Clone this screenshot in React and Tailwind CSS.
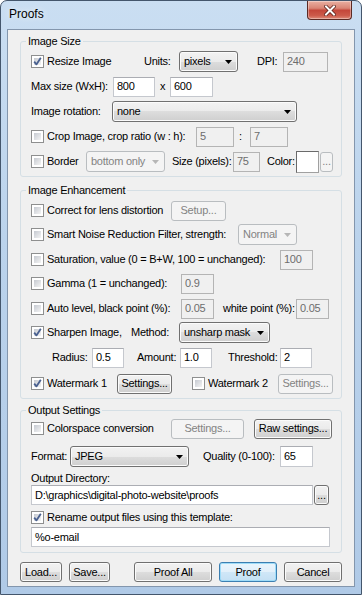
import React from 'react';

const FONT = "font-['Liberation_Sans',Arial,sans-serif]";

function Check({ checked }) {
  return (
    <span className="relative flex w-[13px] h-[13px] shrink-0 border border-[#8e8f8f] bg-white p-[2px]">
      <span className="flex-1 bg-[linear-gradient(135deg,#c6cad1,#f4f4f4)]" />
      {checked && (
        <svg className="absolute inset-0" width="11" height="11" viewBox="0 0 11 11">
          <path d="M2.2 5.6 L4.4 8.4 L8.8 1.8" fill="none" stroke="#4a6190" strokeWidth="1.8" strokeLinejoin="round" />
        </svg>
      )}
    </span>
  );
}

function CheckLabel({ checked, className = '', children }) {
  return (
    <div className={`flex items-center shrink-0 whitespace-nowrap ${className}`}>
      <Check checked={checked} />
      <span className="ml-[3px]">{children}</span>
    </div>
  );
}

function Field({ value, className = '', disabled }) {
  return (
    <div
      className={`h-[20px] shrink-0 flex items-center pl-[3px] border whitespace-nowrap overflow-hidden ${
        disabled
          ? 'bg-[#f0f0f0] border-[#b4b4b4] text-[#6d6d6d]'
          : 'bg-white border-[#c5c8ce] border-t-[#abadb3] text-black'
      } ${className}`}
    >
      {value}
    </div>
  );
}

function Combo({ value, className = '', disabled }) {
  return (
    <div
      className={`h-[21px] shrink-0 flex items-center justify-between pl-[4px] pr-[5px] border rounded-[3px] whitespace-nowrap ${
        disabled
          ? 'bg-[#f4f4f4] border-[#b9bdc0] text-[#838383]'
          : 'bg-[linear-gradient(#f2f2f2,#ebebeb_50%,#dddddd_50%,#cfcfcf)] border-[#707070] text-black shadow-[inset_0_0_0_1px_#fbfbfb]'
      } ${className}`}
    >
      <span>{value}</span>
      <svg width="7" height="4" viewBox="0 0 7 4">
        <polygon points="0,0 7,0 3.5,4" fill={disabled ? '#b6b6b6' : '#000'} />
      </svg>
    </div>
  );
}

function Btn({ children, className = '', disabled, primary }) {
  let look = 'bg-[linear-gradient(#f2f2f2,#ebebeb_50%,#dddddd_50%,#cfcfcf)] border-[#707070] text-black shadow-[inset_0_0_0_1px_#fbfbfb]';
  if (disabled) look = 'bg-[#f4f4f4] border-[#b9bdc0] text-[#838383]';
  if (primary) look = 'bg-[linear-gradient(#eaf5fc,#e2f0fa_50%,#d0e7f7_50%,#c4e0f4)] border-[#3c7fb1] text-black shadow-[inset_0_0_0_1px_#9fdcf8]';
  return (
    <div className={`h-[20px] shrink-0 flex items-center justify-center border rounded-[3px] whitespace-nowrap ${look} ${className}`}>
      {children}
    </div>
  );
}

function Row({ className = '', children }) {
  return <div className={`flex items-center h-[21px] ${className}`}>{children}</div>;
}

function Group({ title, className = '', children }) {
  return (
    <fieldset className={`border border-[#d5dfe5] rounded-[3px] p-0 m-0 ${className}`}>
      <legend className="ml-[5px] px-[2px] leading-[13px]">{title}</legend>
      {children}
    </fieldset>
  );
}

export default function App() {
  return (
    <div className={`${FONT} text-[11px] tracking-[-0.25px] text-black w-[362px] h-[595px] overflow-hidden`}>
      <div className="flex flex-col w-[362px] h-[595px] border border-[#44566c] rounded-t-[7px] bg-[linear-gradient(180deg,#cadef2,#bbd3ec_40%,#b0cae7)]">
        {/* title bar */}
        <div className="flex items-start justify-between h-[28px] shrink-0">
          <span className="ml-[8px] mt-[6px] text-[12px] tracking-normal leading-[15px] [text-shadow:0_0_6px_#ffffff]">Proofs</span>
          <div className="mr-[9px] w-[45px] h-[19px] flex items-center justify-center border border-t-0 border-[#5b2a24] rounded-b-[4px] bg-[linear-gradient(#eab0a2,#d98575_40%,#c4473a_52%,#cc5a4a_80%,#de8a78)] shadow-[inset_0_0_0_1px_rgba(255,255,255,0.35)]">
            <svg width="12" height="11" viewBox="0 0 12 11">
              <path d="M2 1.5 L10 9.5 M10 1.5 L2 9.5" stroke="#5a1f18" strokeWidth="3.6" strokeLinecap="square" />
              <path d="M2 1.5 L10 9.5 M10 1.5 L2 9.5" stroke="#ffffff" strokeWidth="2" strokeLinecap="square" />
            </svg>
          </div>
        </div>

        {/* client area */}
        <div className="mx-[6px] h-[558px] shrink-0 border border-[#8396ad] bg-[#f0f0f0] px-[12px] pt-[5px]">
          <Group title="Image Size">
            <div className="flex flex-col gap-[4px] pl-[10px] pt-[3px] pb-[4px]">
              <Row>
                <CheckLabel checked className="w-[113px]">Resize Image</CheckLabel>
                <span className="w-[35px] shrink-0">Units:</span>
                <Combo value="pixels" className="w-[59px]" />
                <span className="ml-[19px] w-[26px] shrink-0">DPI:</span>
                <Field value="240" disabled className="w-[45px]" />
              </Row>
              <Row>
                <span className="w-[82px] shrink-0 whitespace-nowrap">Max size (WxH):</span>
                <Field value="800" className="w-[42px]" />
                <span className="w-[15px] shrink-0 pl-[5px]">x</span>
                <Field value="600" className="w-[43px]" />
              </Row>
              <Row>
                <span className="w-[81px] shrink-0 whitespace-nowrap">Image rotation:</span>
                <Combo value="none" className="w-[185px]" />
              </Row>
              <Row>
                <CheckLabel className="w-[165px]">Crop Image, crop ratio (w : h):</CheckLabel>
                <Field value="5" disabled className="w-[38px]" />
                <span className="w-[16px] shrink-0 pl-[5px]">:</span>
                <Field value="7" disabled className="w-[38px]" />
              </Row>
              <Row>
                <CheckLabel className="w-[55px]">Border</CheckLabel>
                <Combo value="bottom only" disabled className="w-[79px]" />
                <span className="ml-[7px] w-[61px] shrink-0 whitespace-nowrap">Size (pixels):</span>
                <Field value="75" disabled className="w-[27px]" />
                <span className="ml-[7px] w-[29px] shrink-0">Color:</span>
                <div className="w-[23px] h-[22px] shrink-0 border border-[#a0a0a0] border-t-[#6a6a6a] border-l-[#6a6a6a] bg-white" />
                <Btn disabled className="ml-[1px] w-[13px] h-[18px]">...</Btn>
              </Row>
            </div>
          </Group>

          <Group title="Image Enhancement" className="mt-[7px]">
            <div className="flex flex-col pl-[10px] pt-[3px] pb-[4px]">
              <Row>
                <CheckLabel className="w-[140px]">Correct for lens distortion</CheckLabel>
                <Btn disabled className="w-[55px] h-[19px]">Setup...</Btn>
              </Row>
              <Row className="mt-[3px]">
                <CheckLabel className="w-[207px]">Smart Noise Reduction Filter, strength:</CheckLabel>
                <Combo value="Normal" disabled className="w-[59px]" />
              </Row>
              <Row className="mt-[4px]">
                <CheckLabel className="w-[249px]">Saturation, value (0 = B+W, 100 = unchanged):</CheckLabel>
                <Field value="100" disabled className="w-[33px]" />
              </Row>
              <Row className="mt-[3px]">
                <CheckLabel className="w-[150px]">Gamma (1 = unchanged):</CheckLabel>
                <Field value="0.9" disabled className="w-[33px]" />
              </Row>
              <Row className="mt-[4px]">
                <CheckLabel className="w-[150px]">Auto level, black point (%):</CheckLabel>
                <Field value="0.05" disabled className="w-[33px]" />
                <span className="ml-[9px] w-[73px] shrink-0 whitespace-nowrap">white point (%):</span>
                <Field value="0.05" disabled className="w-[33px]" />
              </Row>
              <Row className="mt-[3px]">
                <CheckLabel checked className="w-[100px]">Sharpen Image,</CheckLabel>
                <span className="w-[48px] shrink-0">Method:</span>
                <Combo value="unsharp mask" className="w-[91px]" />
              </Row>
              <Row className="mt-[4px] pl-[21px]">
                <span className="w-[40px] shrink-0">Radius:</span>
                <Field value="0.5" className="w-[32px]" />
                <span className="ml-[13px] w-[43px] shrink-0">Amount:</span>
                <Field value="1.0" className="w-[32px]" />
                <span className="ml-[16px] w-[52px] shrink-0">Threshold:</span>
                <Field value="2" className="w-[32px]" />
              </Row>
              <Row className="mt-[5px]">
                <CheckLabel checked className="w-[86px]">Watermark 1</CheckLabel>
                <Btn className="w-[55px] h-[19px]">Settings...</Btn>
                <CheckLabel className="ml-[20px] w-[86px]">Watermark 2</CheckLabel>
                <Btn disabled className="w-[55px] h-[19px]">Settings...</Btn>
              </Row>
            </div>
          </Group>

          <Group title="Output Settings" className="mt-[5px]">
            <div className="flex flex-col pl-[10px] pt-[1px] pb-[5px]">
              <Row>
                <CheckLabel className="w-[140px]">Colorspace conversion</CheckLabel>
                <Btn disabled className="w-[73px]">Settings...</Btn>
                <Btn className="ml-[10px] w-[78px]">Raw settings...</Btn>
              </Row>
              <Row className="mt-[7px]">
                <span className="w-[39px] shrink-0">Format:</span>
                <Combo value="JPEG" className="w-[119px]" />
                <span className="ml-[14px] w-[77px] shrink-0 whitespace-nowrap">Quality (0-100):</span>
                <Field value="65" className="w-[33px] h-[21px]" />
              </Row>
              <div className="mt-[5px] h-[13px] leading-[13px]">Output Directory:</div>
              <div className="flex items-center h-[20px]">
                <Field value="D:\graphics\digital-photo-website\proofs" className="w-[282px]" />
                <Btn className="ml-[1px] w-[15px] h-[16px]">...</Btn>
              </div>
              <div className="flex items-center h-[20px] mt-[2px]">
                <CheckLabel checked>Rename output files using this template:</CheckLabel>
              </div>
              <Field value="%o-email" className="w-[299px]" />
            </div>
          </Group>

          <div className="flex justify-between mt-[9px]">
            <div className="flex gap-[7px]">
              <Btn className="w-[42px]">Load...</Btn>
              <Btn className="w-[41px]">Save...</Btn>
            </div>
            <div className="flex gap-[7px]">
              <Btn className="w-[78px]">Proof All</Btn>
              <Btn primary className="w-[58px]">Proof</Btn>
              <Btn className="w-[58px]">Cancel</Btn>
            </div>
          </div>
        </div>
      </div>
    </div>
  );
}
